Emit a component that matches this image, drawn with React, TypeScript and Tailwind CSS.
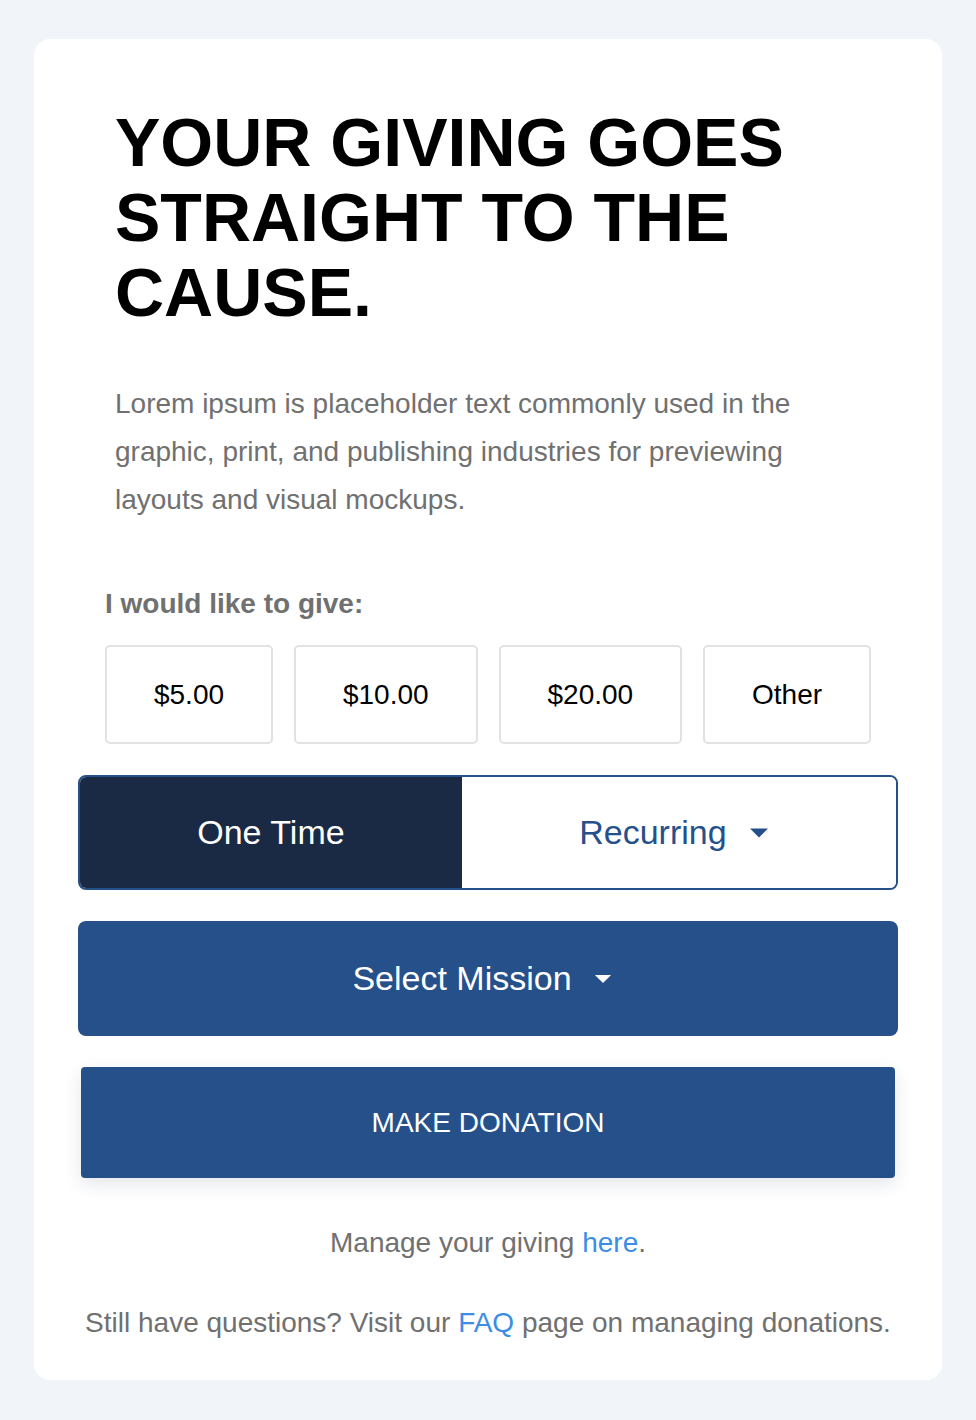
import React, { useState } from 'react';

const AMOUNTS = ['$5.00', '$10.00', '$20.00', 'Other'];

const Caret = ({ className }: { className?: string }) => (
  <svg viewBox="0 0 20 10" className={className} aria-hidden="true">
    <path d="M1 0.5 H19 L10 9.5 Z" fill="currentColor" />
  </svg>
);

export default function App() {
  const [amount, setAmount] = useState<string | null>(null);
  const [frequency, setFrequency] = useState<'once' | 'recurring'>('once');

  return (
    <div className="min-h-[1420px] bg-[#f1f4f9] px-[34px] py-[39px] font-['Liberation_Sans',Arial,sans-serif]">
      <div className="rounded-[16px] bg-white px-[44px] pt-[66px] pb-[39px]">
        {/* Intro */}
        <div className="px-[37px]">
          <h1 className="text-[68px] font-bold leading-[75px] text-black">
            YOUR GIVING GOES STRAIGHT TO THE CAUSE.
          </h1>
          <p className="mt-[50px] text-[28px] leading-[48px] text-[#707070]">
            Lorem ipsum is placeholder text commonly used in the graphic, print, and publishing industries for
            previewing layouts and visual mockups.
          </p>
        </div>

        {/* Amount picker */}
        <div className="mt-[62px] px-[27px]">
          <label className="block text-[28px] font-bold leading-[36px] text-[#707070]">I would like to give:</label>
          <div className="mt-[23px] flex gap-[21px]">
            {AMOUNTS.map((a) => (
              <button
                key={a}
                onClick={() => setAmount(a)}
                className={`h-[99px] flex-auto rounded-[5px] border-2 px-4 text-[28px] text-black ${
                  amount === a ? 'border-[#25508a]' : 'border-[#e2e2e2]'
                }`}
              >
                {a}
              </button>
            ))}
          </div>
        </div>

        {/* Frequency toggle */}
        <div className="mt-[31px] flex h-[115px] overflow-hidden rounded-[8px] border-2 border-[#25508a] text-[34px]">
          <button
            onClick={() => setFrequency('once')}
            className={`w-[46.8%] ${frequency === 'once' ? 'bg-[#1a2a44] text-white' : 'bg-white text-[#25508a]'}`}
          >
            One Time
          </button>
          <button
            onClick={() => setFrequency('recurring')}
            className={`flex flex-1 items-center justify-center gap-[22px] pr-[10px] ${
              frequency === 'recurring' ? 'bg-[#1a2a44] text-white' : 'bg-white text-[#25508a]'
            }`}
          >
            <span>Recurring</span>
            <Caret className="w-[20px] h-[10px]" />
          </button>
        </div>

        {/* Mission select */}
        <button className="mt-[31px] flex h-[115px] w-full items-center justify-center gap-[22px] rounded-[8px] bg-[#25508a] pr-[12px] text-[34px] text-white">
          <span>Select Mission</span>
          <Caret className="w-[18px] h-[10px]" />
        </button>

        {/* Submit */}
        <div className="mt-[31px] px-[3px]">
          <button className="flex h-[111px] w-full items-center justify-center rounded-[4px] bg-[#25508a] text-[28px] text-white shadow-[0_6px_18px_rgba(30,50,90,0.12)]">
            MAKE DONATION
          </button>
        </div>

        {/* Footer links */}
        <div className="mt-[47px] text-center text-[28px] leading-[36px] text-[#707070]">
          <p>
            Manage your giving <a className="text-[#3b8de6]">here</a>.
          </p>
          <p className="mt-[44px]">
            Still have questions? Visit our <a className="text-[#3b8de6]">FAQ</a> page on managing donations.
          </p>
        </div>
      </div>
    </div>
  );
}
